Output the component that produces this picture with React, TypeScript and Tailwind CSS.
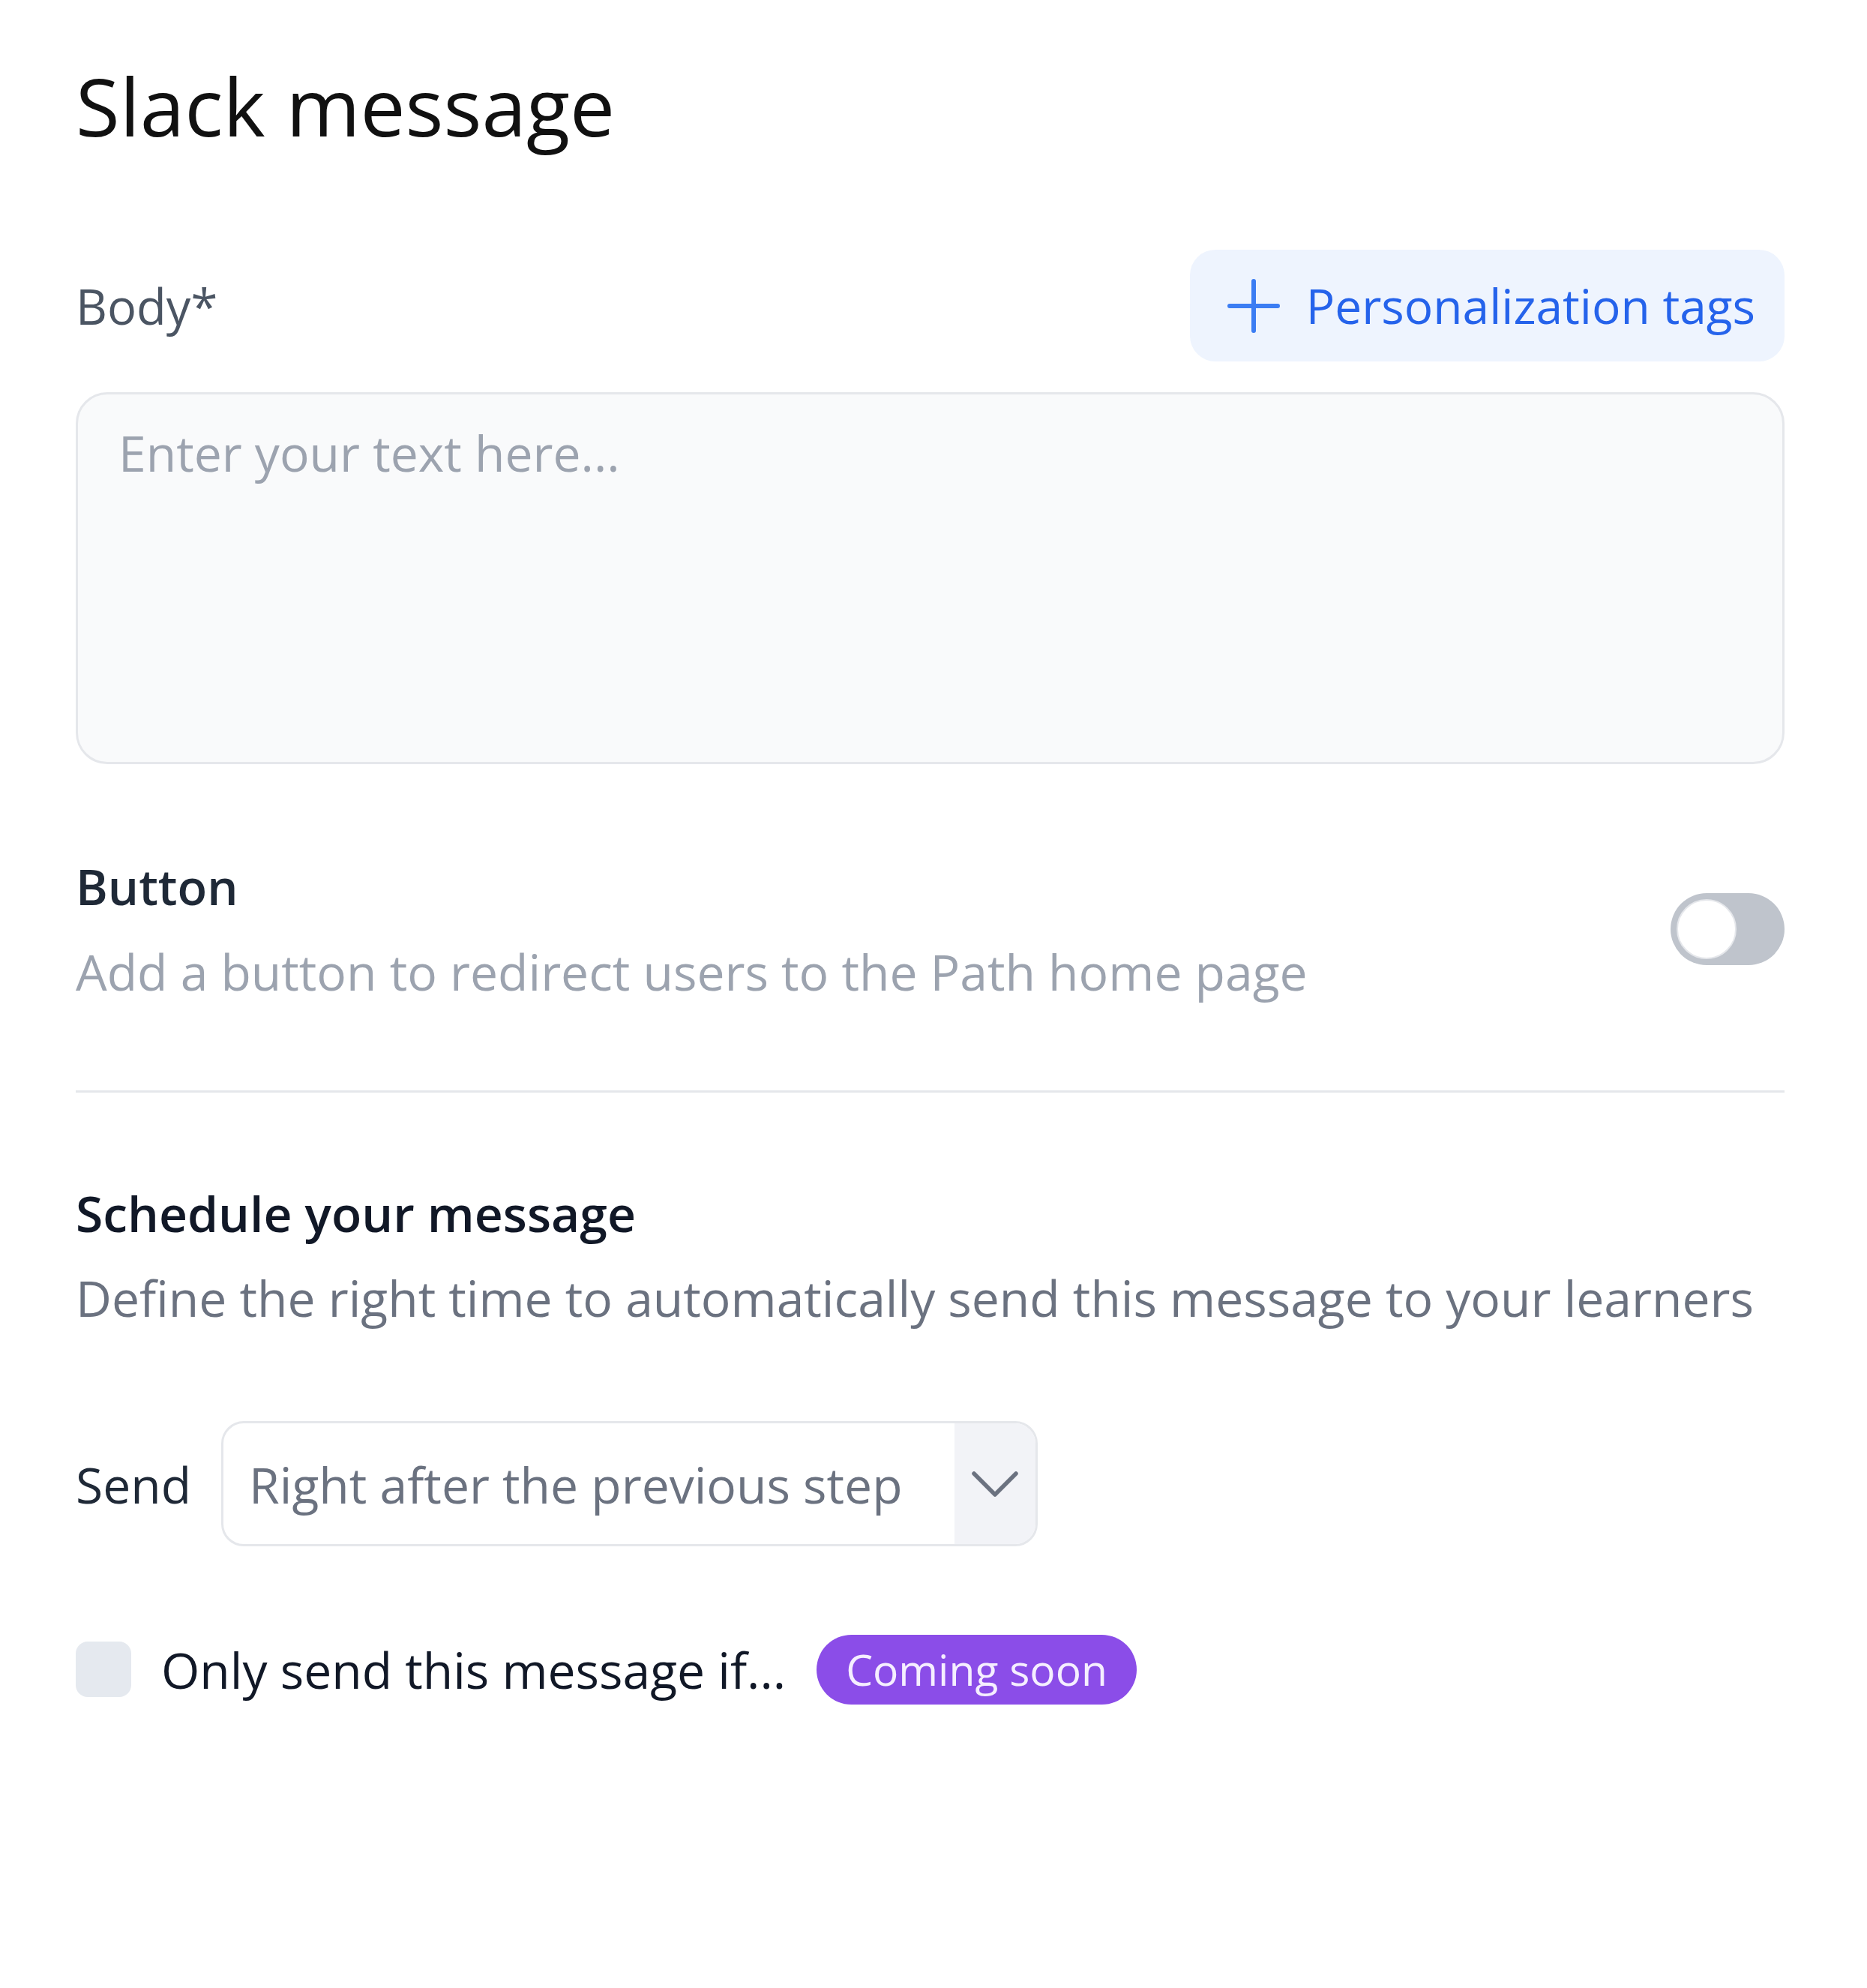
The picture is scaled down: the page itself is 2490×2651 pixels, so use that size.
import React from 'react';

function PlusIcon() {
  return (
    <svg width="72" height="74" viewBox="0 0 72 74" fill="none" stroke="#3b7df3" strokeWidth="6" strokeLinecap="round">
      <path d="M36 4v66M4 37h64" />
    </svg>
  );
}

function ChevronDown() {
  return (
    <svg width="64" height="36" viewBox="0 0 64 36" fill="none" stroke="#6b7280" strokeWidth="5.5" strokeLinecap="round" strokeLinejoin="round">
      <path d="M4 4l28 28L60 4" />
    </svg>
  );
}

export default function App() {
  return (
    <div className="min-h-screen bg-white pl-[101px] pr-[110px] pt-[76px] font-['Open_Sans',sans-serif]">
      <h1 className="text-[107px] leading-[130px] font-medium text-[#111111]">Slack message</h1>

      {/* Body field */}
      <div className="mt-[127px] flex items-center justify-between">
        <label className="text-[65px] leading-[96px] text-[#4b5563]">Body*</label>
        <button className="flex h-[149px] items-center gap-[34px] rounded-[34px] bg-[#eef4fe] pl-[49px] pr-[39px] text-[64px] font-medium leading-[96px] text-[#2563eb]">
          <PlusIcon />
          <span>Personalization tags</span>
        </button>
      </div>
      <textarea
        className="mt-[41px] block h-[496px] w-full resize-none rounded-[42px] border-[3px] border-[#e5e7eb] bg-[#f9fafb] px-[54px] pt-[29px] text-[66px] leading-[96px] text-[#1f2937] outline-none placeholder:text-[#9ca3af]"
        placeholder="Enter your text here..."
      />

      {/* Button toggle */}
      <div className="mt-[115px] flex items-center justify-between">
        <div>
          <div className="text-[65px] font-semibold leading-[96px] text-[#1f2937]">Button</div>
          <div className="mt-[17px] text-[66px] leading-[96px] text-[#9ca3af]">
            Add a button to redirect users to the Path home page
          </div>
        </div>
        <button className="flex h-[96px] w-[152px] items-center rounded-full bg-[#bfc4cc] p-[8px]">
          <span className="block size-[80px] rounded-full border-2 border-[#e5e7eb] bg-white" />
        </button>
      </div>

      <div className="mt-[111px] h-[3px] bg-[#e5e7eb]" />

      {/* Schedule */}
      <div className="mt-[112px]">
        <div className="text-[66px] font-semibold leading-[96px] text-[#111827]">Schedule your message</div>
        <div className="mt-[17px] text-[66px] leading-[96px] text-[#6b7280]">
          Define the right time to automatically send this message to your learners
        </div>
      </div>

      <div className="mt-[117px] flex items-center gap-[40px]">
        <span className="text-[66px] leading-[96px] text-[#1f2937]">Send</span>
        <div className="flex h-[167px] w-[1089px] overflow-hidden rounded-[30px] border-[3px] border-[#e5e7eb] bg-white">
          <div className="flex flex-1 items-center pl-[34px] text-[66px] leading-[96px] text-[#6b7280]">
            Right after the previous step
          </div>
          <div className="flex w-[108px] items-center justify-center bg-[#f2f3f7]">
            <ChevronDown />
          </div>
        </div>
      </div>

      <div className="mt-[116px] flex items-center">
        <span className="block size-[74px] rounded-[16px] bg-[#e5e9ef]" />
        <span className="ml-[40px] text-[66px] leading-[96px] text-[#111827]">Only send this message if...</span>
        <span className="ml-[41px] flex h-[93px] items-center rounded-full bg-[#8b4de8] px-[39px] text-[57px] font-medium leading-[80px] text-[#f5eeff]">
          Coming soon
        </span>
      </div>
    </div>
  );
}
